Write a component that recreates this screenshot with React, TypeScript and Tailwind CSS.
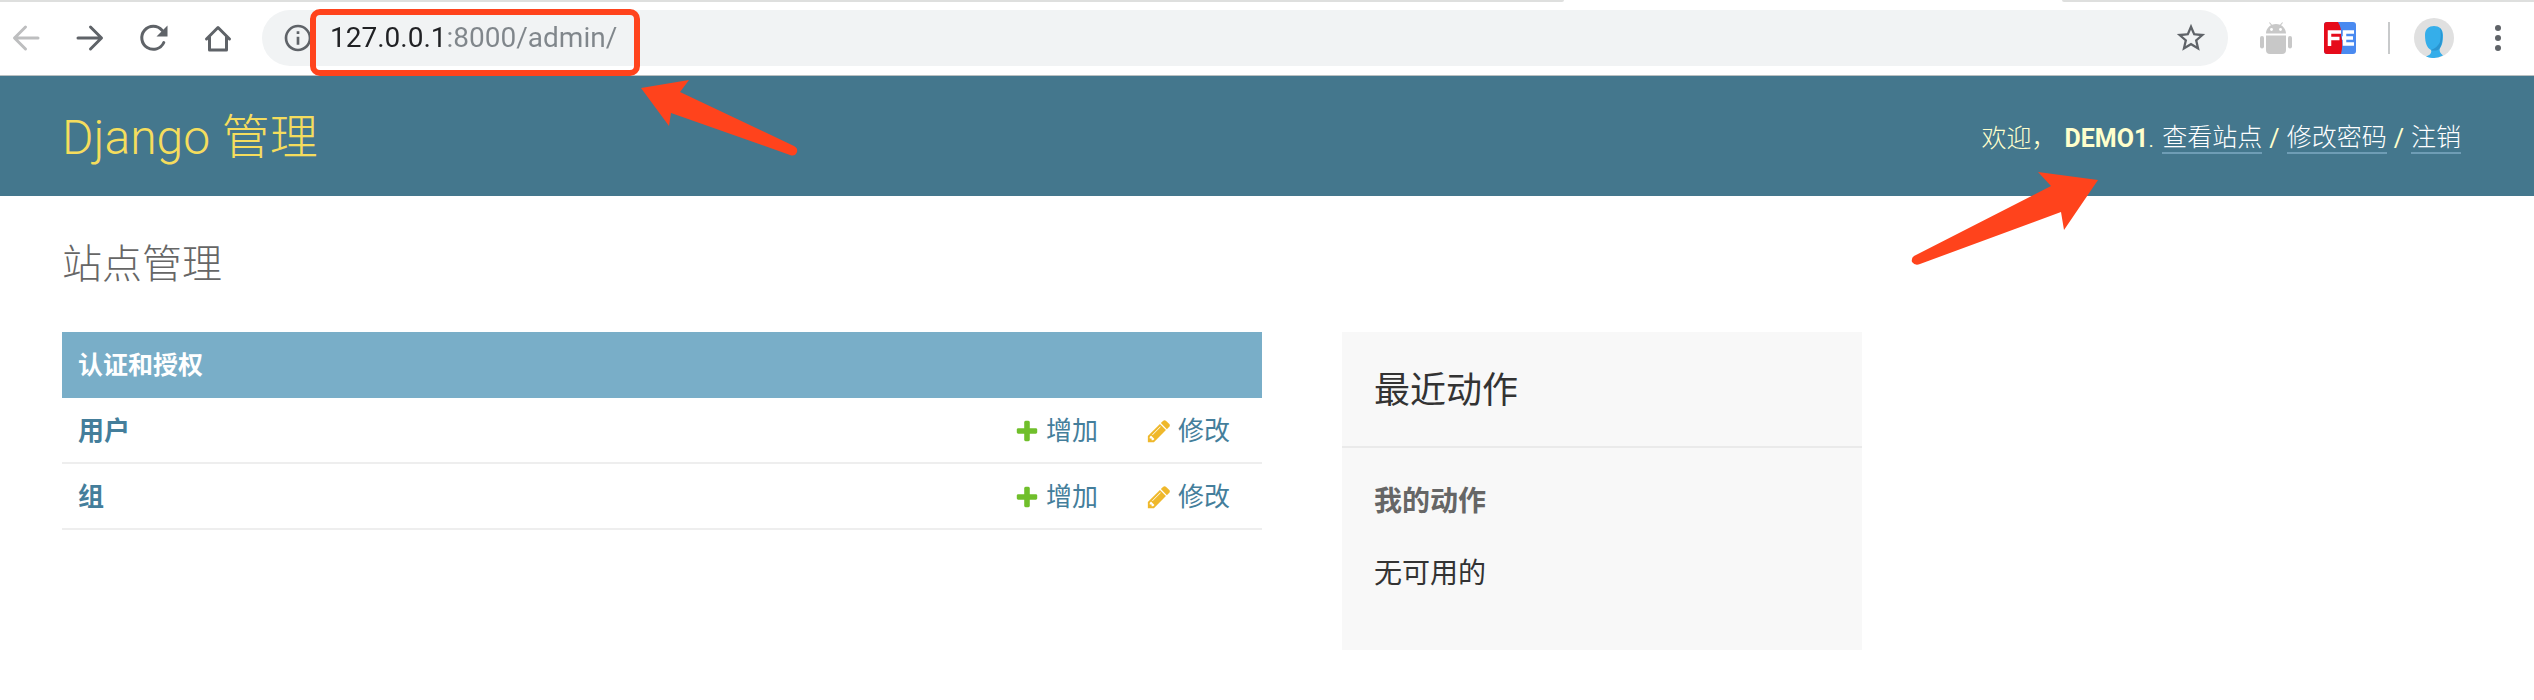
import { useState } from "react";
import { MdInfoOutline, MdStarBorder } from "react-icons/md";

const models = [
  { id: "user", name: "用户" },
  { id: "group", name: "组" },
];

function BackIcon() {
  return (
    <svg width="32" height="32" viewBox="0 0 32 32" fill="none" stroke="currentColor" strokeWidth="3" strokeLinecap="round" strokeLinejoin="round">
      <path d="M28 16H5M15.500 5L4.500 16L15.500 27" />
    </svg>
  );
}

function ForwardIcon() {
  return (
    <svg width="32" height="32" viewBox="0 0 32 32" fill="none" stroke="currentColor" strokeWidth="3" strokeLinecap="round" strokeLinejoin="round">
      <path d="M4 16H27M16.500 5L27.500 16L16.500 27" />
    </svg>
  );
}

function ReloadIcon() {
  return (
    <svg width="32" height="32" viewBox="0 0 32 32" fill="none">
      <path d="M25.800 20.500A11.500 11.500 0 1 1 24 8.300" stroke="currentColor" strokeWidth="3" strokeLinecap="round" />
      <path d="M29.500 3.500V14.500H18.500Z" fill="currentColor" />
    </svg>
  );
}

function HomeIcon() {
  return (
    <svg width="32" height="32" viewBox="0 0 32 32" fill="none" stroke="currentColor" strokeWidth="3" strokeLinecap="round" strokeLinejoin="round">
      <path d="M4.500 17L16 5.500L27.500 17M7.500 15V28H24.500V15" />
    </svg>
  );
}

function AndroidIcon() {
  return (
    <svg width="32" height="32" viewBox="0 0 32 32" fill="#c8c8c8">
      <path d="M6 11.500C6 7.500 8.500 4.500 11 3.200L9 .8L9.800 .2L12 2.700Q16 1.300 20 2.700L22.200 .2L23 .8L21 3.200C23.500 4.500 26 7.500 26 11.500Z" />
      <circle cx="11.500" cy="7.500" r="1.400" fill="#fff" />
      <circle cx="20.500" cy="7.500" r="1.400" fill="#fff" />
      <path d="M6 13.500H26V28Q26 32 22 32H10Q6 32 6 28Z" />
      <rect x="0" y="14" width="4" height="12.500" rx="2" />
      <rect x="28" y="14" width="4" height="12.500" rx="2" />
    </svg>
  );
}

function FeIcon() {
  return (
    <svg width="32" height="32" viewBox="0 0 32 32">
      <rect width="32" height="32" rx="3" fill="#4a8af0" />
      <path d="M3 0H14C17 5 17.500 9 17 14C19 20 18.500 26 17 32H3Q0 32 0 29V3Q0 0 3 0Z" fill="#e60b1a" />
      <path d="M5.500 24V10H17M5.500 16.500H15.500" fill="none" stroke="#fff" strokeWidth="3.500" />
      <path d="M30 10H20.500V22H30M18 16H29" fill="none" stroke="#fff" strokeWidth="3.500" />
    </svg>
  );
}

function AvatarIcon() {
  return (
    <svg width="40" height="40" viewBox="0 0 40 40">
      <circle cx="20" cy="20" r="20" fill="#e0e0e0" />
      <path d="M11 17C11 11 15 8 20 8S29 11 29 17C29 24 28 27 26 30C25 33 26 35 29 37.500Q20 42 12 38.500C16 37 18 35 17 32C13 30 11 25 11 17Z" fill="#35aeea" />
      <path d="M26 10C29 13 29 24 26 30L24 32Q19 33 17 32Q24 29 26 24Q27.500 16 26 10Z" fill="#2a95d0" />
    </svg>
  );
}

function AddIcon() {
  return (
    <svg width="26" height="26" viewBox="0 0 1792 1792" fill="#70bf2b">
      <path d="M1600 796v192q0 40-28 68t-68 28h-416v416q0 40-28 68t-68 28h-192q-40 0-68-28t-28-68v-416h-416q-40 0-68-28t-28-68v-192q0-40 28-68t68-28h416v-416q0-40 28-68t68-28h192q40 0 68 28t28 68v416h416q40 0 68 28t28 68z" />
    </svg>
  );
}

function ChangeIcon() {
  return (
    <svg width="26" height="26" viewBox="0 0 1792 1792" fill="#efb82b">
      <path d="M491 1536l91-91-235-235-91 91v107h128v128h107zm523-928q0-22-22-22-10 0-17 7l-542 542q-7 7-7 17 0 22 22 22 10 0 17-7l542-542q7-7 7-17zm-54-192l416 416-832 832h-416v-416zm683 96q0 53-37 90l-166 166-416-416 166-165q36-38 90-38 53 0 91 38l235 234q37 39 37 91z" />
    </svg>
  );
}

function Toolbar() {
  const [url, setUrl] = useState("127.0.0.1:8000/admin/");

  return (
    <div className="bg-white border-b border-[#b9c0c2]">
      <div className="flex justify-between h-[2px]">
        <div className="w-[1564px] bg-[#dedfde] rounded-br" />
        <div className="w-[472px] bg-[#dedfde] rounded-bl" />
      </div>
      <div className="flex items-center pl-[10px] pr-5 pt-2 pb-[9px] text-[#5f6368]">
        <div className="flex items-center gap-8 mr-7">
          <button aria-label="后退" className="text-[#bdbebf]"><BackIcon /></button>
          <button aria-label="前进"><ForwardIcon /></button>
          <button aria-label="重新加载"><ReloadIcon /></button>
          <button aria-label="主页"><HomeIcon /></button>
        </div>
        <div className="flex flex-1 items-center h-14 pl-5 pr-5 rounded-full bg-[#f1f3f4]">
          <button aria-label="网站信息"><MdInfoOutline size={32} /></button>
          <div className="relative flex-1 ml-4">
            <input
              type="text" aria-label="地址" value={url} onChange={(e) => setUrl(e.target.value)}
              className="block w-full h-10 text-[28px] leading-10 text-transparent caret-black bg-clip-text bg-[linear-gradient(90deg,#202124_111px,#80868b_111px)] focus:outline-none"
            />
            <div className="absolute -left-5 -top-[9px] w-[330px] h-[67px] border-6 border-[#ff431c] rounded-[10px] pointer-events-none" />
          </div>
          <button aria-label="收藏"><MdStarBorder size={34} /></button>
        </div>
        <div className="flex items-center gap-8 ml-8">
          <button aria-label="Android"><AndroidIcon /></button>
          <button aria-label="FE"><FeIcon /></button>
          <div className="w-[2px] h-8 bg-[#c8cacb]" />
        </div>
        <button aria-label="用户资料" className="ml-6"><AvatarIcon /></button>
        <button aria-label="菜单" className="ml-7">
          <svg width="32" height="32" viewBox="0 0 32 32" fill="currentColor">
            <circle cx="16" cy="6" r="3" />
            <circle cx="16" cy="16" r="3" />
            <circle cx="16" cy="26" r="3" />
          </svg>
        </button>
      </div>
    </div>
  );
}

function Header() {
  const link = "text-white border-b-2 border-[#6f9db5]";
  return (
    <header className="relative flex items-center justify-between h-[120px] pt-1 pl-[62px] pr-[73px] bg-[#44778d]">
      <h1 className="text-5xl font-light text-[#f5dd5d]"><a href="#admin">Django 管理</a></h1>
      <div className="flex items-center pt-[2px] text-[25px] leading-7 font-light text-[#ffffcc]">
        <span>欢迎，</span>
        <strong className="ml-2 font-bold">DEMO1</strong>
        <span className="mr-2">.</span>
        <a href="#site" className={link}>查看站点</a>
        <span className="mx-[7px] font-normal">/</span>
        <a href="#password" className={link}>修改密码</a>
        <span className="mx-[7px] font-normal">/</span>
        <a href="#logout" className={link}>注销</a>
      </div>
      <svg className="absolute left-[641px] top-1 pointer-events-none" width="160" height="80" viewBox="641 80 160 80" fill="#ff431c">
        <path d="M641 88L689 80L680 92L794 146Q798 148 797 152Q795 157 790 155L671 113L669 126Z" />
      </svg>
      <svg className="absolute right-[434px] top-[94px] z-10 pointer-events-none" width="190" height="98" viewBox="1910 170 190 98" fill="#ff431c">
        <path d="M2098 180L2038 172L2051 186L1914 256Q1911 258 1912 262Q1915 266 1920 264L2061 212L2064 230Z" />
      </svg>
    </header>
  );
}

export default function App() {
  return (
    <div className="min-h-screen bg-white text-[#333] font-['Roboto','Noto_Sans_CJK_SC',sans-serif]">
      <Toolbar />
      <Header />
      <main className="px-[62px] pt-10">
        <h2 className="mb-[38px] text-[40px] leading-[58px] font-light text-[#666]">站点管理</h2>
        <div className="flex items-start gap-20">
          <table className="w-[1200px] border-separate border-spacing-0 text-[26px] leading-8 text-[#447e9b]">
            <caption className="h-[66px] px-4 pt-[18px] pb-4 text-left text-[25px] font-bold text-white bg-[#79aec8]">
              <a href="#auth">认证和授权</a>
            </caption>
            <tbody>
              {models.map((model) => (
                <tr key={model.id} className="h-[66px]">
                  <th scope="row" className="w-full px-4 pt-[2px] text-left font-bold border-b-2 border-[#eee]"><a href={`#${model.id}`}>{model.name}</a></th>
                  <td className="pt-[2px] pr-12 whitespace-nowrap border-b-2 border-[#eee]">
                    <a href={`#${model.id}/add`} className="flex items-center gap-[6px]"><AddIcon />增加</a>
                  </td>
                  <td className="pt-[2px] pr-8 whitespace-nowrap border-b-2 border-[#eee]">
                    <a href={`#${model.id}/change`} className="flex items-center gap-[6px]"><ChangeIcon />修改</a>
                  </td>
                </tr>
              ))}
            </tbody>
          </table>
          <aside className="w-[520px] pb-14 bg-[#f8f8f8]">
            <h2 className="px-8 pt-[34px] pb-[30px] text-4xl leading-[50px] border-b-2 border-[#eaeaea]">最近动作</h2>
            <h3 className="px-8 pt-[34px] text-[28px] leading-10 font-bold text-[#666]">我的动作</h3>
            <p className="px-8 pt-8 text-[28px] leading-10">无可用的</p>
          </aside>
        </div>
      </main>
    </div>
  );
}
